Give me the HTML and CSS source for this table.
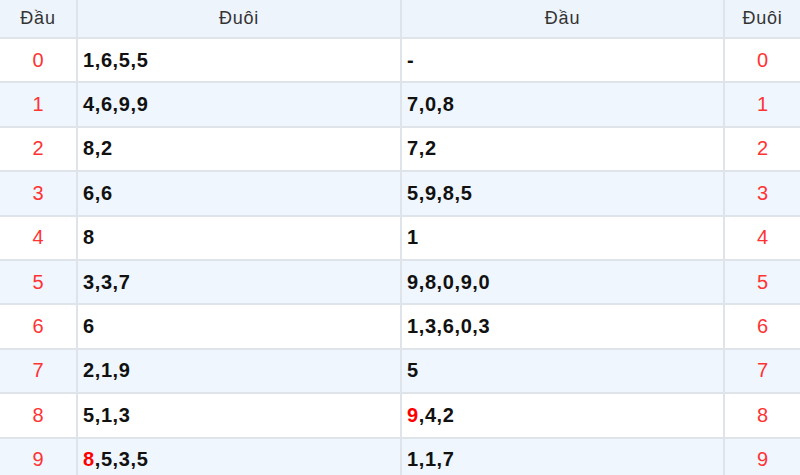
FILE: index.html
```html
<!DOCTYPE html>
<html lang="vi">
<head>
<meta charset="utf-8">
<title>Bảng Đầu Đuôi</title>
<link rel="stylesheet" href="styles.css">
</head>
<body>
<div class="board">
  <div class="row head"><div class="c num">Đầu</div><div class="c mid">Đuôi</div><div class="c mid">Đầu</div><div class="c num">Đuôi</div></div>
  <div class="row"><div class="c num red">0</div><div class="c val">1,6,5,5</div><div class="c val">-</div><div class="c num red">0</div></div>
  <div class="row alt"><div class="c num red">1</div><div class="c val">4,6,9,9</div><div class="c val">7,0,8</div><div class="c num red">1</div></div>
  <div class="row"><div class="c num red">2</div><div class="c val">8,2</div><div class="c val">7,2</div><div class="c num red">2</div></div>
  <div class="row alt"><div class="c num red">3</div><div class="c val">6,6</div><div class="c val">5,9,8,5</div><div class="c num red">3</div></div>
  <div class="row"><div class="c num red">4</div><div class="c val">8</div><div class="c val">1</div><div class="c num red">4</div></div>
  <div class="row alt"><div class="c num red">5</div><div class="c val">3,3,7</div><div class="c val">9,8,0,9,0</div><div class="c num red">5</div></div>
  <div class="row"><div class="c num red">6</div><div class="c val">6</div><div class="c val">1,3,6,0,3</div><div class="c num red">6</div></div>
  <div class="row alt"><div class="c num red">7</div><div class="c val">2,1,9</div><div class="c val">5</div><div class="c num red">7</div></div>
  <div class="row"><div class="c num red">8</div><div class="c val">5,1,3</div><div class="c val"><span class="hl">9</span>,4,2</div><div class="c num red">8</div></div>
  <div class="row alt"><div class="c num red">9</div><div class="c val"><span class="hl">8</span>,5,3,5</div><div class="c val">1,1,7</div><div class="c num red">9</div></div>
</div>
</body>
</html>
```

FILE: styles.css
```css
html, body {
  margin: 0;
  padding: 0;
  background: #ffffff;
}

body {
  font-family: "Liberation Sans", Arial, sans-serif;
  overflow: hidden;
}

.board {
  display: grid;
  grid-template-columns: 76px 322px 321px 75px;
  grid-template-rows: 37px;
  grid-auto-rows: 42.4px;
  gap: 2px;
  background: #dfe4ea;
  width: 800px;
}

.row {
  display: contents;
}

.c {
  display: flex;
  align-items: center;
  background: #ffffff;
}

.head .c {
  background: #edf4fc;
  color: #333333;
  font-size: 18px;
  letter-spacing: 0.8px;
  justify-content: center;
  padding-bottom: 1px;
}

.alt .c {
  background: #eff6fe;
}

.num {
  justify-content: center;
}

.red {
  color: #ff3333;
  font-size: 20px;
}

.val {
  padding-left: 5px;
  font-weight: bold;
  font-size: 20px;
  letter-spacing: 0.6px;
  color: #111111;
}

.hl {
  color: #ff0000;
}
```
